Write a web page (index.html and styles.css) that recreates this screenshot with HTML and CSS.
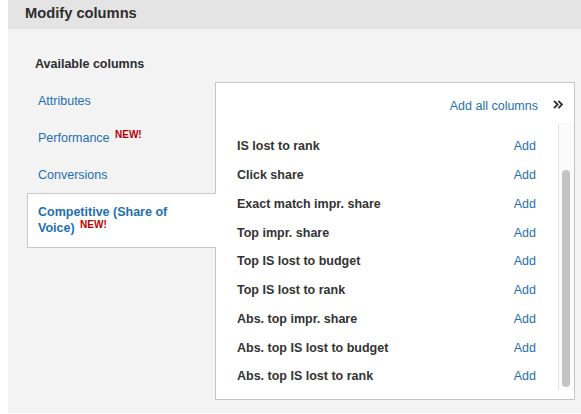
FILE: index.html
```html
<!DOCTYPE html>
<html>
<head>
<meta charset="utf-8">
<link rel="stylesheet" href="styles.css">
</head>
<body>
<div class="dialog">
  <div class="title">Modify columns</div>
  <div class="content">
    <div class="nav-heading">Available columns</div>
    <div class="main">
      <div class="nav">
        <a class="nav-item">Attributes</a>
        <a class="nav-item">Performance <span class="new">NEW!</span></a>
        <a class="nav-item">Conversions</a>
        <a class="nav-item selected">Competitive (Share of Voice) <span class="new">NEW!</span></a>
      </div>
      <div class="panel">
        <div class="panel-head">
          <a class="link">Add all columns</a>
          <svg class="chev" width="10" height="9" viewBox="0 0 10 9"><path d="M1 0.8 L4.6 4.5 L1 8.2 M5.4 0.8 L9 4.5 L5.4 8.2" fill="none" stroke="#333" stroke-width="1.9"/></svg>
        </div>
        <div class="list-wrap">
          <div class="list">
            <div class="row"><span class="label">IS lost to rank</span><a class="link">Add</a></div>
            <div class="row"><span class="label">Click share</span><a class="link">Add</a></div>
            <div class="row"><span class="label">Exact match impr. share</span><a class="link">Add</a></div>
            <div class="row"><span class="label">Top impr. share</span><a class="link">Add</a></div>
            <div class="row"><span class="label">Top IS lost to budget</span><a class="link">Add</a></div>
            <div class="row"><span class="label">Top IS lost to rank</span><a class="link">Add</a></div>
            <div class="row"><span class="label">Abs. top impr. share</span><a class="link">Add</a></div>
            <div class="row"><span class="label">Abs. top IS lost to budget</span><a class="link">Add</a></div>
            <div class="row"><span class="label">Abs. top IS lost to rank</span><a class="link">Add</a></div>
          </div>
          <div class="track"><div class="thumb"></div></div>
        </div>
      </div>
    </div>
  </div>
</div>
</body>
</html>
```
FILE: styles.css
```css
html, body {
  margin: 0;
  padding: 0;
  background: #ffffff;
}
body {
  font-family: "Liberation Sans", Arial, Helvetica, sans-serif;
  color: #333333;
}
.dialog {
  margin-left: 8px;
  height: 413px;
  display: flex;
  flex-direction: column;
}
.title {
  height: 29px;
  box-sizing: border-box;
  line-height: 26px;
  padding-left: 17px;
  font-size: 14.7px;
  font-weight: bold;
  color: #2e2e2e;
  background: #e4e4e4;
}
.content {
  flex: 1;
  background: #f3f3f3;
  padding: 27px 6px 13px 19px;
  display: flex;
  flex-direction: column;
}
.nav-heading {
  font-size: 12.5px;
  line-height: 16px;
  font-weight: bold;
  color: #2e2e2e;
  padding-left: 8px;
  margin-bottom: 10px;
}
.main {
  display: flex;
}
.nav {
  flex: 0 0 188px;
  display: flex;
  flex-direction: column;
}
.nav-item {
  display: block;
  font-size: 12.5px;
  line-height: 16px;
  color: #1f6fb0;
  padding: 10px 40px 9px 10px;
  border: 1px solid transparent;
  border-right: none;
}
.nav-item.selected {
  font-weight: bold;
  background: #ffffff;
  border-color: #c9c9c9;
  padding-bottom: 11px;
  margin-right: -1px;
  position: relative;
  z-index: 1;
}
.new {
  font-size: 10px;
  line-height: 1;
  font-weight: bold;
  color: #b80000;
  vertical-align: 4px;
  margin-left: 2px;
}
.panel {
  flex: 1;
  height: 318px;
  box-sizing: border-box;
  background: #ffffff;
  border: 1px solid #c6c6c6;
  display: flex;
  flex-direction: column;
  padding-bottom: 9px;
  overflow: hidden;
}
.panel-head {
  height: 40px;
  flex: 0 0 40px;
  box-sizing: border-box;
  padding: 15px 11px 0 0;
  display: flex;
  justify-content: flex-end;
  align-items: flex-start;
}
.link {
  font-size: 12.5px;
  line-height: 16px;
  color: #1f6fb0;
}
.chev {
  margin-left: 15px;
  margin-top: 2px;
}
.list-wrap {
  flex: 1;
  min-height: 0;
  display: flex;
}
.list {
  flex: 1;
  padding-top: 9px;
}
.row {
  display: flex;
  justify-content: space-between;
  padding: 6.38px 22px 6.38px 21px;
  font-size: 12.5px;
  line-height: 16px;
}
.label {
  font-weight: bold;
  color: #333333;
}
.track {
  flex: 0 0 16px;
  box-sizing: border-box;
  border-left: 1px solid #e6e6e6;
  background: #fbfbfb;
  padding: 47px 4px 3px 3px;
  display: flex;
}
.thumb {
  flex: 1;
  background: #c3c3c3;
  border-radius: 4px;
}
```
